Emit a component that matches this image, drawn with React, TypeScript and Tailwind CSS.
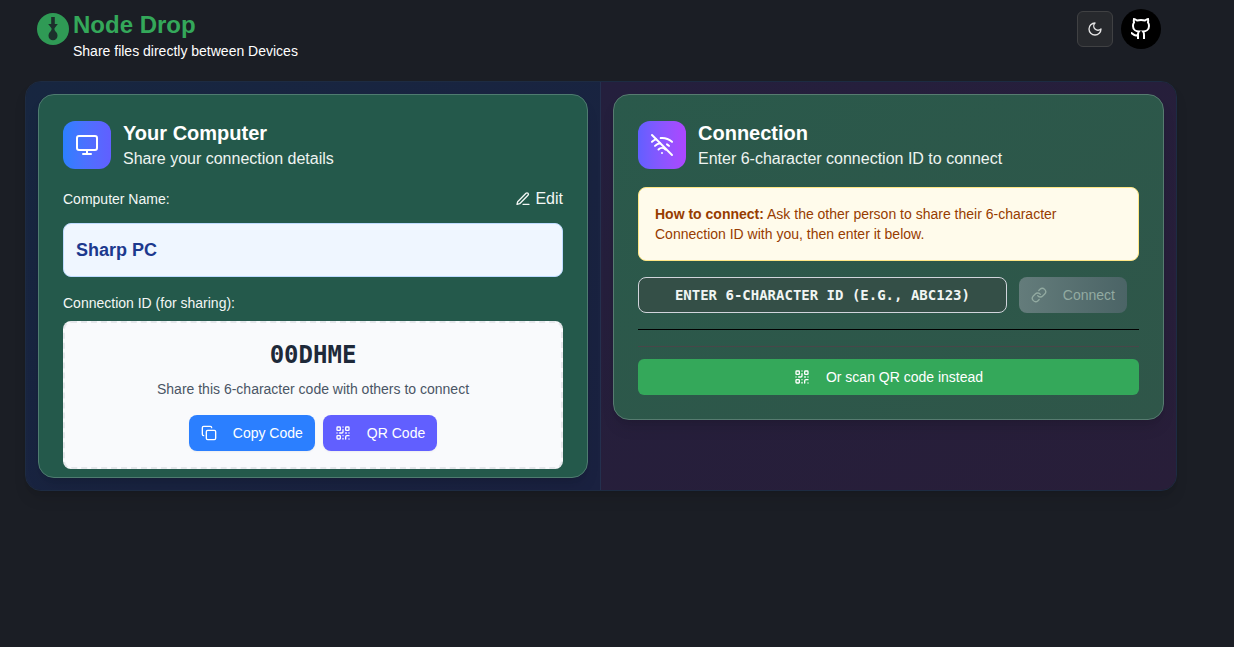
import React, { useState } from 'react';
import { Copy, Github, Link, Monitor, QrCode, WifiOff } from 'lucide-react';

interface CardHeaderProps {
  icon: React.ReactNode;
  iconClass: string;
  title: string;
  subtitle: string;
}

function Logo() {
  return (
    <svg viewBox="0 0 32 32" className="mt-1 h-8 w-8" aria-hidden="true">
      <circle cx="16" cy="16" r="16" fill="#2f9a55" />
      <path
        d="M14.200 4h3.600v7h3l-3.300 4.300v1.400c.3 1 .9 1.600 1.500 2.300 1 1.100 1.500 2.300 1.500 3.700a4.500 4.500 0 0 1-9 0c0-1.400.5-2.600 1.500-3.700.6-.7 1.200-1.300 1.500-2.300v-1.400L11.200 11h3z"
        fill="#1c2f2b"
      />
    </svg>
  );
}

function MoonIcon() {
  return (
    <svg
      viewBox="0 0 24 24"
      className="h-4 w-4"
      fill="none"
      stroke="currentColor"
      strokeWidth="2"
      strokeLinecap="round"
      strokeLinejoin="round"
      aria-hidden="true"
    >
      <path d="M12 3a6 6 0 0 0 9 9 9 9 0 1 1-9-9Z" />
    </svg>
  );
}

function EditIcon() {
  return (
    <svg
      viewBox="0 0 24 24"
      className="h-4 w-4"
      fill="none"
      stroke="currentColor"
      strokeWidth="2"
      strokeLinecap="round"
      strokeLinejoin="round"
      aria-hidden="true"
    >
      <path d="M12 20h9" />
      <path d="M16.500 3.500a2.120 2.120 0 0 1 3 3L7 19l-4 1 1-4Z" />
    </svg>
  );
}

function CardHeader({ icon, iconClass, title, subtitle }: CardHeaderProps) {
  return (
    <div className="flex items-center gap-3">
      <div className={`flex h-12 w-12 items-center justify-center rounded-xl text-white ${iconClass}`}>
        {icon}
      </div>
      <div>
        <h2 className="text-xl font-bold text-white">{title}</h2>
        <p className="text-base text-[#eef4f1]">{subtitle}</p>
      </div>
    </div>
  );
}

function Header() {
  return (
    <header className="flex items-start justify-between pt-[9px] pr-4 pb-5 pl-3">
      <div className="flex items-start gap-1">
        <Logo />
        <div>
          <h1 className="text-2xl font-bold text-[#34a85a]">Node Drop</h1>
          <p className="text-sm text-white">Share files directly between Devices</p>
        </div>
      </div>
      <div className="flex items-center gap-2">
        <button
          type="button"
          aria-label="Toggle theme"
          className="flex h-9 w-9 items-center justify-center rounded-md border border-[#404143] bg-[#27292d] text-[#e5e5e5]"
        >
          <MoonIcon />
        </button>
        <a
          href="#github"
          aria-label="GitHub"
          className="flex h-10 w-10 items-center justify-center rounded-full bg-black text-white"
        >
          <Github className="h-6 w-6" strokeLinecap="butt" strokeLinejoin="miter" />
        </a>
      </div>
    </header>
  );
}

function ComputerCard() {
  return (
    <section className="rounded-2xl border border-[#4f7b70] bg-[#24594b] px-6 pt-6 pb-2 shadow-lg">
      <CardHeader
        icon={<Monitor className="h-6 w-6" />}
        iconClass="bg-linear-to-r from-[#2b7fff] to-[#615fff]"
        title="Your Computer"
        subtitle="Share your connection details"
      />

      <div className="mt-4 flex items-center justify-between text-[#f3f7f5]">
        <span className="text-sm">Computer Name:</span>
        <button type="button" className="flex items-center gap-1 text-base">
          <EditIcon />
          Edit
        </button>
      </div>
      <div className="mt-3 rounded-lg border border-[#bedbff] bg-[#eff6ff] p-3 text-lg/7 font-bold text-[#1c398e]">
        Sharp PC
      </div>

      <p className="mt-4 text-sm text-[#f3f7f5]">Connection ID (for sharing):</p>
      <div className="mt-2 rounded-lg border-2 border-dashed border-[#e5e7eb] bg-[#f9fafc] p-4 text-center">
        <div className="font-['DejaVu_Sans_Mono',monospace] text-2xl font-bold text-[#1e2939]">00DHME</div>
        <p className="mt-2 text-sm text-[#4a5565]">Share this 6-character code with others to connect</p>
        <div className="mt-4 flex justify-center gap-2 text-sm text-white">
          <button type="button" className="flex h-9 items-center gap-4 rounded-lg bg-[#2b7fff] px-3 shadow-xs">
            <Copy className="h-4 w-4" />
            Copy Code
          </button>
          <button type="button" className="flex h-9 items-center gap-4 rounded-lg bg-[#615fff] px-3 shadow-xs">
            <QrCode className="h-4 w-4" />
            QR Code
          </button>
        </div>
      </div>
    </section>
  );
}

function ConnectionCard() {
  const [code, setCode] = useState('');

  return (
    <section className="rounded-2xl border border-[#577b70] bg-linear-to-br from-[#2a594b] to-[#2f5649] p-6 shadow-lg">
      <CardHeader
        icon={<WifiOff className="h-6 w-6" />}
        iconClass="bg-linear-to-r from-[#615fff] to-[#ad46ff]"
        title="Connection"
        subtitle="Enter 6-character connection ID to connect"
      />

      <p className="mt-4 rounded-lg border border-[#fee685] bg-[#fffbeb] p-4 text-sm text-[#973c00]">
        <strong>How to connect:</strong> Ask the other person to share their 6-character Connection ID with you, then
        enter it below.
      </p>

      <div className="mt-4 mr-3 flex gap-3">
        <input
          type="text"
          aria-label="Connection ID"
          value={code}
          onChange={(e) => setCode(e.target.value.toUpperCase())}
          maxLength={6}
          placeholder="ENTER 6-CHARACTER ID (E.G., ABC123)"
          className="h-9 min-w-0 flex-1 rounded-lg border border-[#d1d5dc] bg-[#344f47] px-3 text-center font-['DejaVu_Sans_Mono',monospace] text-sm font-bold text-white placeholder:text-[#f1f5f3]"
        />
        <button
          type="button"
          disabled
          className="flex h-9 items-center gap-4 rounded-lg bg-linear-to-r from-[#647c7b] to-[#4b6466] px-3 text-sm text-[#92aaa1]"
        >
          <Link className="h-4 w-4" />
          Connect
        </button>
      </div>

      <div className="mt-4 border-t border-black pt-4">
        <div className="border-t border-[#484649] pt-3">
          <button
            type="button"
            className="flex h-9 w-full items-center justify-center gap-4 rounded-md bg-[#34a85a] text-sm text-white"
          >
            <QrCode className="h-4 w-4" />
            Or scan QR code instead
          </button>
        </div>
      </div>
    </section>
  );
}

export default function App() {
  return (
    <div className="min-h-screen bg-[#1b1e25] pr-8 font-['Liberation_Sans',Arial,sans-serif]">
      <div className="mx-auto max-w-6xl">
        <Header />
        <main className="grid grid-cols-2 overflow-hidden rounded-2xl border border-[#1d2b42] shadow-lg">
          <div className="border-r border-[#24304e] bg-linear-to-br from-[#172640] to-[#1a2140] p-3">
            <ComputerCard />
          </div>
          <div className="bg-linear-to-br from-[#241f3d] to-[#281e39] p-3">
            <ConnectionCard />
          </div>
        </main>
      </div>
    </div>
  );
}
